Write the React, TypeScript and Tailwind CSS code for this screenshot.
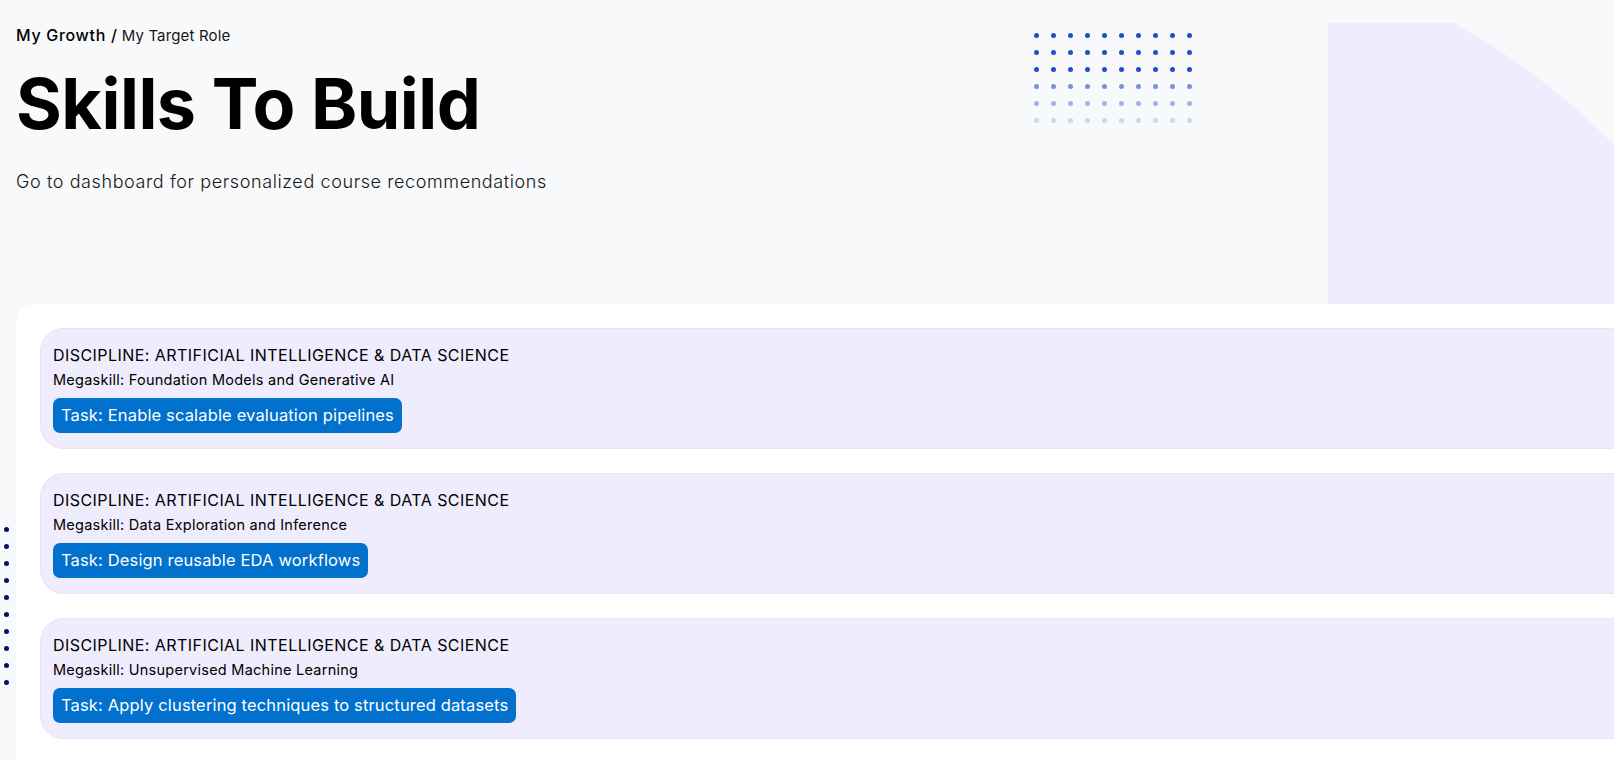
import React from "react";

type Skill = {
  discipline: string;
  megaskill: string;
  task: string;
};

const skills: Skill[] = [
  {
    discipline: "DISCIPLINE: ARTIFICIAL INTELLIGENCE & DATA SCIENCE",
    megaskill: "Megaskill: Foundation Models and Generative AI",
    task: "Task: Enable scalable evaluation pipelines",
  },
  {
    discipline: "DISCIPLINE: ARTIFICIAL INTELLIGENCE & DATA SCIENCE",
    megaskill: "Megaskill: Data Exploration and Inference",
    task: "Task: Design reusable EDA workflows",
  },
  {
    discipline: "DISCIPLINE: ARTIFICIAL INTELLIGENCE & DATA SCIENCE",
    megaskill: "Megaskill: Unsupervised Machine Learning",
    task: "Task: Apply clustering techniques to structured datasets",
  },
];

// fading rows of the dotted pattern in the header
const rowFade = [
  "opacity-100",
  "opacity-100",
  "opacity-100",
  "opacity-60",
  "opacity-40",
  "opacity-20",
];

function DotPattern() {
  return (
    <div className="absolute left-[1034px] top-[33px] flex flex-col gap-[12px]">
      {rowFade.map((fade, r) => (
        <div key={r} className={`flex gap-[12px] ${fade}`}>
          {Array.from({ length: 10 }).map((_, c) => (
            <span key={c} className="block h-[5px] w-[5px] rounded-full bg-[#2150c6]" />
          ))}
        </div>
      ))}
    </div>
  );
}

function CornerShape() {
  return (
    <svg
      className="absolute left-[1328px] top-[23px]"
      width="286"
      height="281"
      viewBox="0 0 286 281"
      aria-hidden="true"
    >
      <path d="M0 0 L126 0 A711 711 0 0 1 286 121.5 L286 281 L0 281 Z" fill="#efedfd" />
    </svg>
  );
}

function SideDots() {
  return (
    <div className="absolute left-[4px] top-[527px] flex flex-col gap-[12px]">
      {Array.from({ length: 10 }).map((_, i) => (
        <span key={i} className="block h-[5px] w-[5px] rounded-full bg-[#0d0b6c]" />
      ))}
    </div>
  );
}

function SkillCard({ skill }: { skill: Skill }) {
  return (
    <div className="rounded-l-[24px] border border-r-0 border-[#f2dcf8] bg-[#efedfd] pl-[12px] pt-[16px] pb-[15px]">
      <div className="text-[16px] leading-[20px] font-normal tracking-[0.45px] text-black">
        {skill.discipline}
      </div>
      <div className="mt-[6px] text-[14.5px] leading-[18px] font-normal tracking-[0.25px] text-black">
        {skill.megaskill}
      </div>
      <div className="mt-[9px] flex">
        <span className="flex h-[35px] items-center rounded-[7px] bg-[#0270cd] px-[8px] text-[16.5px] tracking-[0.15px] text-white">
          {skill.task}
        </span>
      </div>
    </div>
  );
}

export default function App() {
  return (
    <div
      className="relative min-h-[760px] w-full overflow-hidden bg-[#f8f9fb]"
      style={{ fontFamily: "Inter, 'Noto Sans', 'DejaVu Sans', sans-serif" }}
    >
      <header className="relative h-[304px] overflow-hidden pl-[16px]">
        <CornerShape />
        <DotPattern />
        <div className="relative pt-[25px]">
          <nav className="flex items-baseline gap-[4px] leading-[20px]">
            <span className="text-[16px] font-medium tracking-[0.7px] text-black">My Growth /</span>
            <span className="text-[15px] tracking-[0.15px] text-[#161616]">My Target Role</span>
          </nav>
          <h1 className="mt-[23px] text-[70px] leading-none font-bold tracking-[-0.5px] text-black">
            Skills To Build
          </h1>
          <p className="mt-[29px] text-[18px] leading-[28px] font-light tracking-[0.6px] text-[#161616]">
            Go to dashboard for personalized course recommendations
          </p>
        </div>
      </header>

      <SideDots />

      <main className="ml-[16px] rounded-tl-[20px] bg-white pl-[24px] pt-[24px] pb-[24px]">
        <div className="flex flex-col gap-[24px]">
          {skills.map((s, i) => (
            <SkillCard key={i} skill={s} />
          ))}
        </div>
      </main>
    </div>
  );
}
